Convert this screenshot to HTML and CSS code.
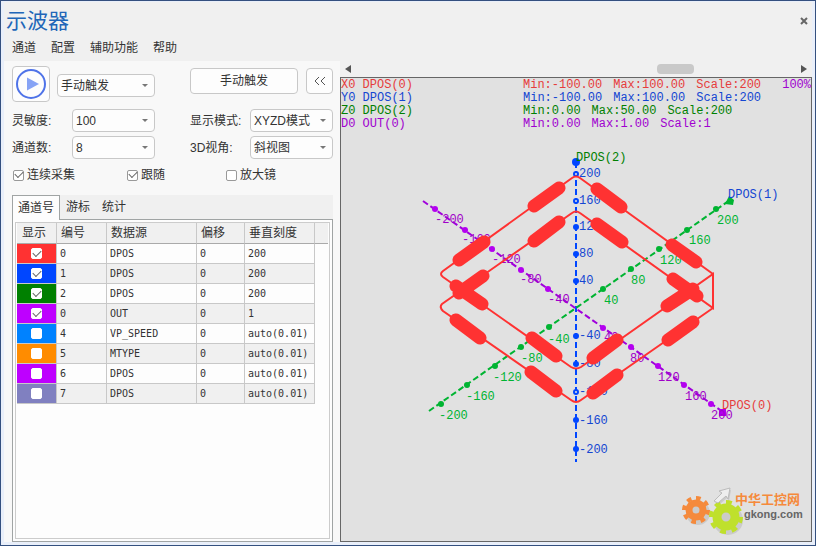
FILE: index.html
```html
<!DOCTYPE html>
<html lang="zh-CN">
<head>
<meta charset="utf-8">
<title>示波器</title>
<link rel="stylesheet" href="styles.css">
</head>
<body>
<div class="window">
  <header class="titlebar">
    <h1>示波器</h1>
    <button class="close" type="button" aria-label="关闭"><svg width="8" height="8" viewBox="0 0 8 8"><path d="M1 1L7 7M7 1L1 7"/></svg></button>
  </header>
  <nav class="menu">
    <a href="#">通道</a><a href="#">配置</a><a href="#">辅助功能</a><a href="#">帮助</a>
  </nav>
  <main class="content">
    <section class="side">
      <div class="controls">
        <div class="field start">
          <button class="btn play" type="button" aria-label="启动">
            <svg width="30" height="30" viewBox="0 0 30 30"><circle cx="15" cy="15" r="14"/><path d="M11 8.500L23 15L11 21.500Z"/></svg>
          </button>
          <span class="select"><select aria-label="触发方式"><option>手动触发</option></select></span>
        </div>
        <div class="field actions">
          <button class="btn trigger" type="button">手动触发</button>
          <button class="btn fold" type="button" aria-label="收起"><svg width="12" height="10" viewBox="0 0 12 10"><path d="M5 1L1 5L5 9M11 1L7 5L11 9"/></svg></button>
        </div>
        <div class="field"><label for="sens">灵敏度:</label><span class="select"><select id="sens"><option>100</option></select></span></div>
        <div class="field"><label for="mode">显示模式:</label><span class="select"><select id="mode"><option>XYZD模式</option></select></span></div>
        <div class="field"><label for="count">通道数:</label><span class="select"><select id="count"><option>8</option></select></span></div>
        <div class="field"><label for="view">3D视角:</label><span class="select"><select id="view"><option>斜视图</option></select></span></div>
      </div>
      <div class="checks">
        <label><input type="checkbox" checked>连续采集</label>
        <label><input type="checkbox" checked>跟随</label>
        <label><input type="checkbox">放大镜</label>
      </div>
      <div class="tabs" role="tablist">
        <button type="button" role="tab" class="tab active" aria-selected="true">通道号</button>
        <button type="button" role="tab" class="tab">游标</button>
        <button type="button" role="tab" class="tab">统计</button>
      </div>
      <div class="tabpanel">
        <div class="tableframe">
          <table>
            <colgroup><col class="c-show"><col class="c-no"><col class="c-src"><col class="c-off"><col class="c-scale"><col></colgroup>
            <thead><tr><th>显示</th><th>编号</th><th>数据源</th><th>偏移</th><th>垂直刻度</th><th></th></tr></thead>
            <tbody>
              <tr><td class="red"><input type="checkbox" aria-label="显示" checked></td><td>0</td><td>DPOS</td><td>0</td><td>200</td></tr>
              <tr><td class="blue"><input type="checkbox" aria-label="显示" checked></td><td>1</td><td>DPOS</td><td>0</td><td>200</td></tr>
              <tr><td class="green"><input type="checkbox" aria-label="显示" checked></td><td>2</td><td>DPOS</td><td>0</td><td>200</td></tr>
              <tr><td class="purple"><input type="checkbox" aria-label="显示" checked></td><td>0</td><td>OUT</td><td>0</td><td>1</td></tr>
              <tr><td class="sky"><input type="checkbox" aria-label="显示"></td><td>4</td><td>VP_SPEED</td><td>0</td><td>auto(0.01)</td></tr>
              <tr><td class="orange"><input type="checkbox" aria-label="显示"></td><td>5</td><td>MTYPE</td><td>0</td><td>auto(0.01)</td></tr>
              <tr><td class="purple"><input type="checkbox" aria-label="显示"></td><td>6</td><td>DPOS</td><td>0</td><td>auto(0.01)</td></tr>
              <tr><td class="slate"><input type="checkbox" aria-label="显示"></td><td>7</td><td>DPOS</td><td>0</td><td>auto(0.01)</td></tr>
            </tbody>
          </table>
        </div>
      </div>
    </section>
    <section class="scope">
      <div class="scroll">
        <button type="button" aria-label="向左"><svg width="6" height="8" viewBox="0 0 6 8"><path d="M6 0V8L0 4Z"/></svg></button>
        <input type="range" min="0" max="100" value="74" aria-label="水平滚动">
        <button type="button" aria-label="向右"><svg width="6" height="8" viewBox="0 0 6 8"><path d="M0 0V8L6 4Z"/></svg></button>
      </div>
      <div class="plot">
        <svg class="chart" viewBox="-235 -230 470 463">
          <g class="ax-z">
            <path class="axis" d="M0 -146V154"/>
            <circle cy="-146" r="4"/>
            <g class="open"><circle cy="-134" r="2"/><circle cy="-107" r="2"/><circle cy="84" r="2"/></g>
            <circle cy="-81" r="3"/><circle cy="-54" r="3"/><circle cy="-27" r="3"/><circle cy="28" r="3"/><circle cy="56" r="3"/><circle cy="112" r="3"/><circle cy="141" r="3"/>
            <text x="3" y="-131">200</text><text x="3" y="-104">160</text><text x="3" y="-78">120</text><text x="3" y="-51">80</text><text x="3" y="-24">40</text>
            <text x="3" y="31">-40</text><text x="3" y="59">-80</text><text x="3" y="87">-120</text><text x="3" y="116">-160</text><text x="3" y="145">-200</text>
          </g>
          <g class="ax-y">
            <path class="axis" d="M-147 103L154 -108"/>
            <path d="M149 -104L153 -112L158 -108L157 -103Z"/>
            <circle cx="140" cy="-99" r="3"/><circle cx="111" cy="-78" r="3"/><circle cx="83" cy="-59" r="3"/><circle cx="55" cy="-39" r="3"/><circle cx="27" cy="-19" r="3"/>
            <circle cx="-27" cy="19" r="3"/><circle cx="-55" cy="39" r="3"/><circle cx="-81" cy="58" r="3"/><circle cx="-109" cy="77" r="3"/><circle cx="-135" cy="96" r="3"/>
            <text x="141" y="-84">200</text><text x="113" y="-64">160</text><text x="84" y="-44">120</text><text x="55" y="-24">80</text><text x="28" y="-4">40</text>
            <text x="-28" y="35">-40</text><text x="-55" y="54">-80</text><text x="-83" y="73">-120</text><text x="-110" y="92">-160</text><text x="-137" y="111">-200</text>
          </g>
          <g class="ax-x">
            <path class="axis" d="M-153 -107L147 104"/>
            <path d="M143 101H150V108H143Z"/>
            <circle cx="-141" cy="-99" r="3"/><circle cx="-111" cy="-78" r="3"/><circle cx="-84" cy="-59" r="3"/><circle cx="-55" cy="-38" r="3"/><circle cx="-28" cy="-19" r="3"/>
            <circle cx="27" cy="20" r="3"/><circle cx="55" cy="39" r="3"/><circle cx="82" cy="58" r="3"/><circle cx="108" cy="77" r="3"/><circle cx="135" cy="96" r="3"/>
            <text x="-141" y="-85">-200</text><text x="-114" y="-65">-160</text><text x="-84" y="-45">-120</text><text x="-56" y="-25">-80</text><text x="-28" y="-5">-40</text>
            <text x="28" y="33">40</text><text x="54" y="54">80</text><text x="82" y="73">120</text><text x="109" y="92">160</text><text x="135" y="111">200</text>
          </g>
          <g class="trace">
            <path d="M137 -34L4 -130Q0 -133 -4 -130L-133 -37Q-137 -34 -133 -31L-5 59Q0 62 5 59L137 -34V0L4 -95Q0 -98 -4 -95L-134 -4Q-137 -1 -133 3L-5 92Q0 96 5 92L137 0"/>
            <path class="dwell" d="M-42 -102L-17 -120M-117 -48L-92 -66M-42 -67L-17 -86M-117 -15L-93 -32M21 -119L45 -101M96 -63L120 -46M21 -84L46 -66M97 -29L121 -12M91 -2L117 -19M17 50L41 32M92 32L117 14M17 85L41 67M-120 -22L-94 -4M-44 30L-20 48M-120 12L-96 30M-45 64L-20 83"/>
          </g>
          <text class="t-green" x="0" y="-147">DPOS(2)</text>
          <text class="t-blue" x="152" y="-110">DPOS(1)</text>
          <text class="t-red" x="146" y="101">DPOS(0)</text>
        </svg>
        <div class="legend">
          <div class="row t-red"><span>X0 DPOS(0)</span><span>Min:-100.00</span><span>Max:100.00</span><span>Scale:200</span><span class="zoom">100%</span></div>
          <div class="row t-blue"><span>Y0 DPOS(1)</span><span>Min:-100.00</span><span>Max:100.00</span><span>Scale:200</span></div>
          <div class="row t-green"><span>Z0 DPOS(2)</span><span>Min:0.00</span><span>Max:50.00</span><span>Scale:200</span></div>
          <div class="row t-purple"><span>D0 OUT(0)</span><span>Min:0.00</span><span>Max:1.00</span><span>Scale:1</span></div>
        </div>
        <svg class="brand" width="130" height="54" viewBox="0 0 130 54">
          <g class="shadow"><circle cx="17" cy="26" r="12"/><circle cx="47" cy="33" r="15"/><path d="M34 16L42 8L39 6L50 3L48 14L46 11L38 18Z"/></g>
          <g class="gear-a"><circle cx="15" cy="23" r="7"/><circle class="teeth" cx="15" cy="23" r="12" pathLength="64"/></g>
          <g class="gear-b"><circle cx="45" cy="30" r="9"/><circle class="teeth" cx="45" cy="30" r="15" pathLength="64"/></g>
          <path class="arrow" d="M33 14L41 6L38 4L49 1L47 12L45 9L37 16Z"/>
          <text class="brand-cn" x="54" y="17">中华工控网</text>
          <text class="brand-en" x="63" y="31">gkong.com</text>
        </svg>
      </div>
    </section>
  </main>
</div>
</body>
</html>
```
FILE: styles.css
```css
* { box-sizing: border-box; }
body {
  margin: 0;
  font: 12px/16px "Liberation Sans", "Noto Sans CJK SC", sans-serif;
  color: #333;
}
button, select, input { font: inherit; color: inherit; margin: 0; }
button { padding: 0; border: 0; background: none; }
svg { display: block; }

.window {
  display: flex;
  flex-direction: column;
  height: 100vh;
  min-height: 480px;
  padding: 1px 3px 3px;
  border: 1px solid #34507f;
  background: #f0f0f0;
  box-shadow: inset 3px 0 #e9effa, inset -3px 0 #e9effa, inset 0 -3px #e9effa, inset 0 1px #e9effa;
}
.titlebar { display: flex; justify-content: space-between; align-items: center; height: 38px; padding: 0 4px 0 2px; }
h1 { margin: 0; font-size: 21px; line-height: 32px; font-weight: 400; color: #2166b8; }
.close { padding: 4px 0; }
.close path { fill: none; stroke: #666; stroke-width: 2; }
.menu { display: flex; gap: 15px; height: 21px; padding-left: 8px; }
.menu a { color: #333; text-decoration: none; }

.content { display: flex; flex: 1; min-height: 0; }
.side { display: flex; flex-direction: column; flex: 0 0 336px; padding: 4px 7px 0 8px; background: #f8f8f8; }
.controls { display: grid; grid-template-columns: 1fr 1fr; gap: 4px 35px; }
.field { display: flex; align-items: center; height: 23px; }
.field label { flex: 0 0 60px; }
.field.start { height: 37px; gap: 7px; align-items: flex-end; margin-bottom: 3px; }
.field.start .select { margin-bottom: 5px; }
.field.actions { height: 37px; gap: 8px; padding-bottom: 5px; }
.btn { display: grid; place-items: center; border: 1px solid #c8c8c8; border-radius: 4px; background: #fdfdfd; }
.play { flex: 0 0 38px; height: 36px; }
.play circle { fill: none; stroke: #4f73e8; stroke-width: 2; }
.play path { fill: #86a3f5; }
.trigger { flex: 1; height: 26px; }
.fold { flex: 0 0 27px; height: 26px; }
.fold path { fill: none; stroke: #555; }

.select { position: relative; flex: 1; height: 23px; }
.select::after {
  content: "";
  position: absolute;
  right: 7px;
  top: 10px;
  border: 3px solid transparent;
  border-top-color: #777;
  border-bottom: 0;
  pointer-events: none;
}
select {
  appearance: none;
  display: block;
  width: 100%;
  height: 100%;
  padding: 0 3px;
  border: 1px solid #c8c8c8;
  border-radius: 4px;
  background: #fdfdfd;
}

input[type="checkbox"] {
  appearance: none;
  display: grid;
  place-items: center;
  width: 11px;
  height: 11px;
  border: 1px solid #999;
  border-radius: 2px;
  background: #fff;
}
input[type="checkbox"]:checked::before {
  content: "";
  width: 7px;
  height: 4px;
  margin-bottom: 3px;
  border: solid #666;
  border-width: 0 0 1px 1px;
  transform: rotate(-45deg);
}
.checks { display: grid; grid-template-columns: 114px 99px 1fr; margin: 8px 0; padding-left: 1px; }
.checks label { display: flex; align-items: center; gap: 3px; }

.tabs { display: flex; height: 24px; margin-top: 4px; background: #f0f0f0; }
.tab { padding: 0 6px; }
.tab.active { height: 25px; padding: 0 5px; border: 1px solid #a0a4a4; border-bottom: 0; background: #fdfdfd; position: relative; }
.tabpanel { display: flex; flex: 1; padding: 2px; border: 1px solid #a0a4a4; background: #fdfdfd; }
.tableframe { flex: 1; padding: 0 1px; border: 1px solid #ccc; }
table { width: 100%; table-layout: fixed; border-collapse: separate; border-spacing: 0; }
.c-show { width: 40px; }
.c-no { width: 50px; }
.c-src { width: 90px; }
.c-off { width: 48px; }
.c-scale { width: 70px; }
th {
  height: 21px;
  padding: 0 4px;
  border-right: 1px solid #c8c8c8;
  border-bottom: 1px solid #aaa;
  background: #f0f0f0;
  font-weight: 400;
  line-height: 16px;
  text-align: left;
}
th:first-child { padding-left: 5px; }
th:last-child { border-right: 0; }
td {
  height: 20px;
  padding: 0 3px;
  border-right: 1px solid #c8c8c8;
  border-bottom: 1px solid #c8c8c8;
  font: 10px/16px "DejaVu Sans Mono", monospace;
}
tr:nth-child(even) td { background: #f0f0f0; }
td input { margin: 0 auto; }
td input[type="checkbox"] { border-color: #fff; }
tbody tr td.red { background: #ff3232; }
tbody tr td.blue { background: #0046ff; }
tbody tr td.green { background: #008000; }
tbody tr td.purple { background: #be00ff; }
tbody tr td.sky { background: #0082ff; }
tbody tr td.orange { background: #ff8c00; }
tbody tr td.slate { background: #8080c0; }

.scope { display: flex; flex-direction: column; flex: 1; min-width: 0; }
.scroll { display: flex; align-items: center; height: 16px; padding: 0 5px; }
.scroll button path { fill: #555; }
.scroll input { appearance: none; flex: 1; min-width: 0; height: 10px; background: none; }
.scroll input::-webkit-slider-thumb { appearance: none; width: 37px; height: 10px; border-radius: 4px; background: #c9c9c9; }
.plot {
  display: grid;
  grid-template: minmax(0, 1fr) / minmax(0, 1fr);
  flex: 1;
  min-height: 0;
  border: 1px solid #666;
  background: #e1e1e1;
  font: 12px/13px "Liberation Mono", monospace;
}
.plot > * { grid-area: 1 / 1; }
.chart { width: 100%; height: 100%; }
.legend { padding-top: 1px; }
.row { display: flex; gap: 11px; }
.row span:first-child { flex: 0 0 171px; }
.zoom { margin-left: auto; color: #a000d0; }
.t-red { color: #e63c3c; fill: #e63c3c; }
.t-blue { color: #1446d2; fill: #1446d2; }
.t-green { color: #008000; fill: #008000; }
.t-purple { color: #a000d0; fill: #a000d0; }
.axis { fill: none; stroke-width: 2; stroke-dasharray: 6 3; }
.ax-z { fill: #0046ff; }
.ax-z .axis { stroke: #0046ff; }
.ax-z text { fill: #1446d2; }
.ax-z .open { fill: #e1e1e1; stroke: #0046ff; stroke-width: 2; }
.ax-y { fill: #00b432; }
.ax-y .axis { stroke: #00b432; }
.ax-x { fill: #b400f0; }
.ax-x .axis { stroke: #a000dc; }
.ax-x text { fill: #a000c8; }
.trace { fill: none; stroke: #ff3232; stroke-width: 2; }
.dwell { stroke-width: 13; stroke-linecap: round; }

.brand { align-self: end; justify-self: end; }
.brand .shadow { fill: #999; opacity: 0.3; }
.gear-a circle { fill: none; stroke: #f58a3c; stroke-width: 7; }
.gear-b circle { fill: none; stroke: #bfe02c; stroke-width: 9; }
.gear-a .teeth, .gear-b .teeth { stroke-width: 4; stroke-dasharray: 4 4; }
.arrow { fill: #eee; stroke: #bbb; }
.brand-cn { font: 700 13px "Noto Sans CJK SC", sans-serif; fill: #f58a3c; }
.brand-en { font: 700 11px "Liberation Sans", sans-serif; fill: #666; }
```
